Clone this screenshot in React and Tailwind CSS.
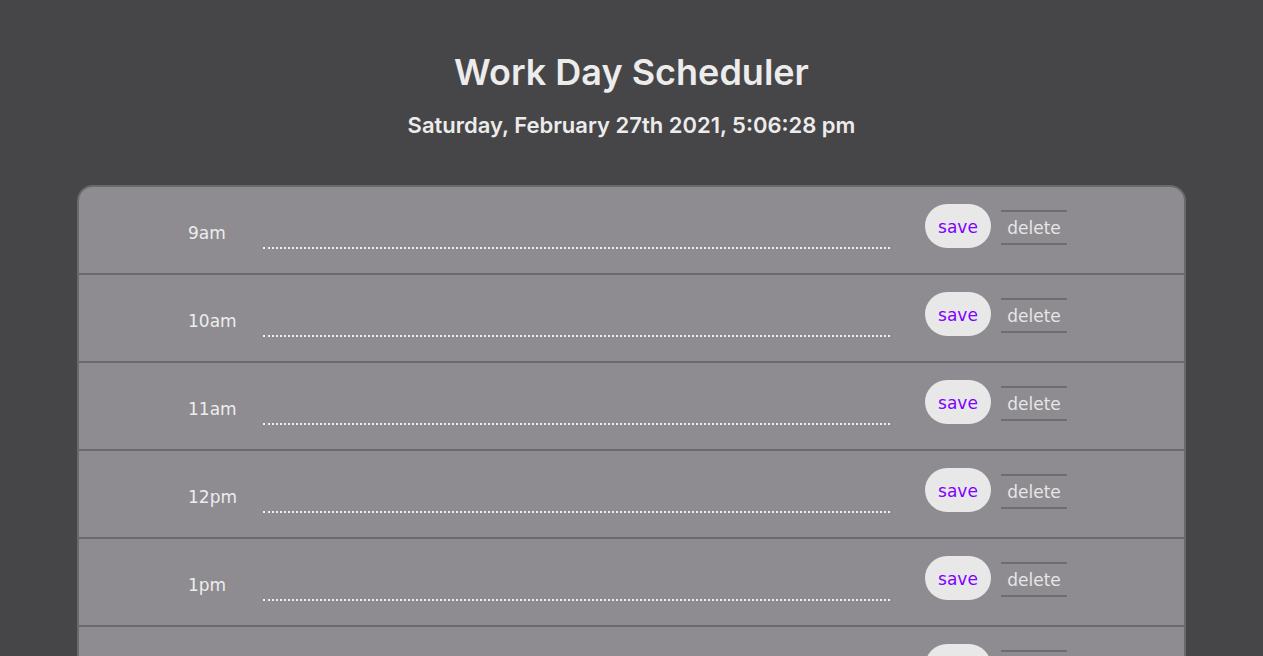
const hours = ["9am", "10am", "11am", "12pm", "1pm", "2pm", "3pm", "4pm", "5pm"];

function HourRow({ hour, last }) {
  return (
    <div
      className={`flex items-start h-[88px] ${last ? "" : "border-b-2 border-[#6a696c]"}`}
    >
      <div className="w-[184px] pl-[109px] pt-[33px] text-[17px] leading-[27px] text-[#ededed] font-['DejaVu_Sans',sans-serif]">
        {hour}
      </div>
      <input
        type="text"
        className="mt-[32px] w-[627px] h-[30px] bg-transparent border-b-2 border-dotted border-[#f0f0f0] outline-none text-[#f0f0f0] font-['DejaVu_Sans',sans-serif]"
      />
      <button className="ml-[35px] mt-[17px] w-[66px] h-[44px] pt-[3px] rounded-full bg-[#e9e8e9] text-[#7f00ff] text-[17px] font-['DejaVu_Sans',sans-serif]">
        save
      </button>
      <button className="ml-[10px] mt-[23px] w-[66px] h-[35px] pt-[2px] border-y-2 border-[#6d6c6f] text-[#e6e6e6] text-[17px] font-['DejaVu_Sans',sans-serif]">
        delete
      </button>
    </div>
  );
}

export default function App() {
  return (
    <div className="min-h-screen bg-[#464548] pb-10">
      <header className="pt-[48px] text-center text-[#ececec] font-['Inter',sans-serif]">
        <h1 className="text-[36px] leading-[48px] font-semibold">Work Day Scheduler</h1>
        <p className="mt-[15px] text-[22px] leading-[28px] font-semibold">
          Saturday, February 27th 2021, 5:06:28 pm
        </p>
      </header>

      <main className="mx-auto mt-[46px] w-[1109px] rounded-[16px] border-2 border-[#6a696c] bg-[#8e8c90] overflow-hidden">
        {hours.map((h, i) => (
          <HourRow key={h} hour={h} last={i === hours.length - 1} />
        ))}
      </main>
    </div>
  );
}
